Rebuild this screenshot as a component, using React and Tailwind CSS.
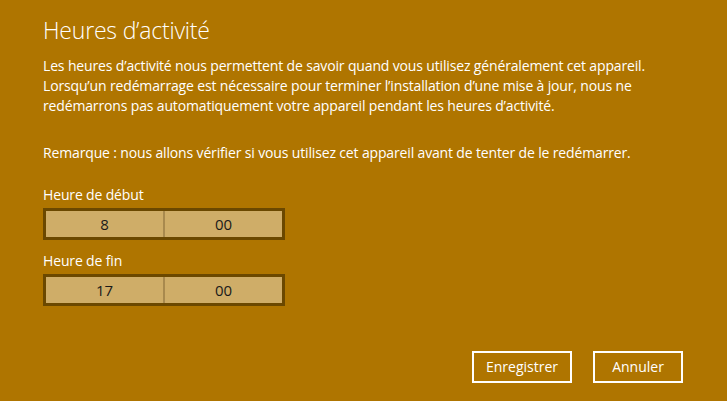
export default function App() {
  const font = { fontFamily: '"Open Sans", "Noto Sans", sans-serif' };
  return (
    <div
      className="w-[727px] h-[401px] bg-[#af7500] text-white flex flex-col pl-[43px] pr-4 pt-[16px] pb-[18px] overflow-hidden"
      style={font}
    >
      <h1 className="text-[23px] font-light leading-[28px] tracking-[-0.2px]">Heures d’activité</h1>
      <div className="mt-[12px] text-[14px] leading-[20px] tracking-[-0.15px]">
        <p>Les heures d’activité nous permettent de savoir quand vous utilisez généralement cet appareil.</p>
        <p>Lorsqu’un redémarrage est nécessaire pour terminer l’installation d’une mise à jour, nous ne</p>
        <p>redémarrons pas automatiquement votre appareil pendant les heures d’activité.</p>
        <p className="mt-[27px]">Remarque : nous allons vérifier si vous utilisez cet appareil avant de tenter de le redémarrer.</p>
      </div>

      <TimeField className="mt-[22px]" label="Heure de début" hour="8" minute="00" />
      <TimeField className="mt-[11px]" label="Heure de fin" hour="17" minute="00" />

      <div className="mt-auto flex justify-end gap-[21px] pr-[28px]">
        <button className="w-[100px] h-[32px] border-2 border-white text-[14px] leading-none">Enregistrer</button>
        <button className="w-[90px] h-[32px] border-2 border-white text-[14px] leading-none">Annuler</button>
      </div>
    </div>
  );
}

function TimeField({ label, hour, minute, className }) {
  return (
    <div className={className}>
      <div className="text-[14px] leading-[20px] tracking-[-0.15px]">{label}</div>
      <div className="mt-[3px] w-[242px] h-[32px] border-[3px] border-[#6b4800] bg-[#cfad68] flex text-[#1a1a1a] text-[15px]">
        <div className="flex-1 flex items-center justify-center border-r-2 border-[#a8894e]">{hour}</div>
        <div className="flex-1 flex items-center justify-center">{minute}</div>
      </div>
    </div>
  );
}
